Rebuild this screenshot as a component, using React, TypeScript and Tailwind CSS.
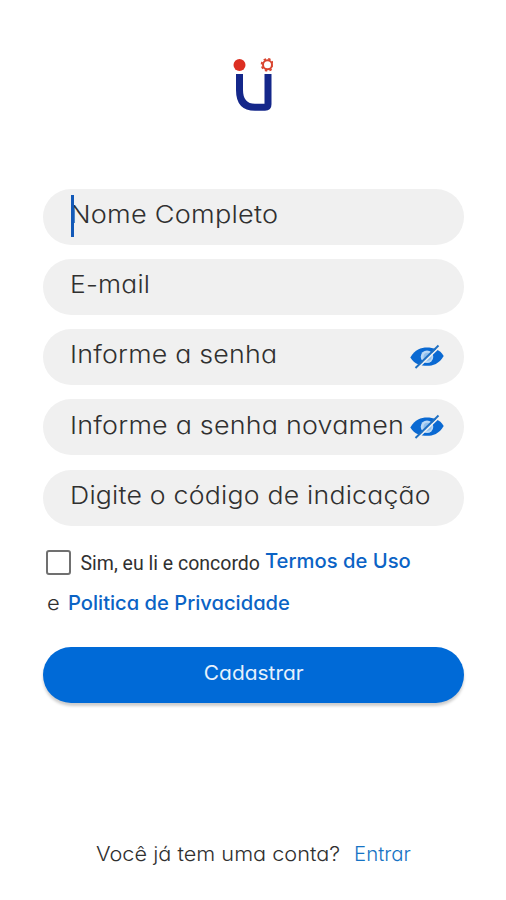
import { useState } from 'react';

const fields = [
    { name: 'nome', label: 'Nome Completo', focused: true, className: 'scale-x-[1.13]' },
    { name: 'email', label: 'E-mail', className: 'scale-x-[1.1]' },
    { name: 'senha', label: 'Informe a senha', secret: true, className: 'scale-x-[1.115]' },
    { name: 'senha2', label: 'Informe a senha novamen', secret: true, className: 'scale-x-[1.119]' },
    { name: 'codigo', label: 'Digite o código de indicação', className: 'scale-x-[1.11]' },
];

function Logo() {
    return (
        <svg width="40" height="56" viewBox="0 0 40 56" fill="none">
            <circle cx="6.5" cy="9" r="6" fill="#dc2f22" />
            <circle cx="34.5" cy="8.8" r="4.5" stroke="#d9442f" strokeWidth="2" />
            <circle cx="34.5" cy="8.8" r="5.9" stroke="#d9442f" strokeWidth="1.8" strokeDasharray="2.4 2.234" />
            <path d="M6.5 18V34Q6.5 51.3 22 51.3H32Q35 51.3 35 48.3V18" stroke="#14278a" strokeWidth="7" />
        </svg>
    );
}

function EyeOff() {
    return (
        <svg width="34" height="26" viewBox="0 0 34 26" className="shrink-0">
            <path d="M0.3 13.5C5 5.5 11 3.6 17 3.6S30 5.5 33.7 12C29 20 23 21.8 17 21.8S4.5 20.5 0.3 13.5Z" fill="#0a69d2" />
            <circle cx="17" cy="12.7" r="6.3" fill="#b9d8f5" />
            <circle cx="17.5" cy="12.7" r="4" fill="#8fbfee" />
            <path d="M7.2 24.6L29.4 3.2" stroke="#f0f0f0" strokeWidth="1.8" />
            <path d="M5.5 24L28.5 1.5" stroke="#1f70c2" strokeWidth="1.9" />
        </svg>
    );
}

export default function App() {
    const [accepted, setAccepted] = useState(false);

    return (
        <div className="h-[900px] w-[506px] overflow-hidden bg-white px-[42.5px] pt-[55.5px] font-['Inter','Open_Sans',sans-serif] font-light text-[#303030] [font-feature-settings:'cv11'] whitespace-nowrap">
            <div className="flex h-[133px] justify-center pr-[1px]">
                <Logo />
            </div>

            <div className="flex w-[421.5px] flex-col gap-[14.3px]">
                {fields.map((field) => (
                    <div key={field.name} className="flex h-[56px] items-center rounded-full bg-[#f0f0f0] pl-[28px] pr-[20px]">
                        <div className="relative flex-1 pb-[3.4px] text-[24px] leading-[32px]">
                            <span className={`-ml-px inline-block origin-left tracking-[0.2px] ${field.className}`}>{field.label}</span>
                            {field.focused && <div className="absolute -top-[4px] left-0 h-[42px] w-[3px] bg-[#1259b8]"></div>}
                        </div>
                        {field.secret && <EyeOff />}
                    </div>
                ))}
            </div>

            <div className="mt-[17.2px] flex h-[40px] items-center pl-[3px]">
                <button
                    onClick={() => setAccepted(!accepted)}
                    className="h-[25px] w-[25px] shrink-0 rounded-[3px] border-2 border-[#707070]"
                >
                    {accepted ? '✓' : ''}
                </button>
                <span className="ml-[10px] w-[184px] pt-[1px] font-[Roboto,sans-serif] text-[19.5px] font-normal">Sim, eu li e concordo</span>
                <a className="origin-left scale-x-[1.01] pb-[4px] text-[20px] font-medium text-[#0b63c5]">Termos de Uso</a>
            </div>
            <div className="flex h-[42px] items-center pb-[1px] pl-[4px] text-[20px]">
                <span className="w-[21px] origin-left scale-x-110">e</span>
                <a className="origin-left scale-x-[1.008] font-medium text-[#0b63c5]">Politica de Privacidade</a>
            </div>

            <button className="mt-[22px] flex h-[56px] w-[421.5px] items-center justify-center rounded-full bg-[#006ad7] pb-[3px] text-[20px] font-normal text-[#e6f1fc] shadow-[0_3px_3px_rgba(0,0,0,0.2)]">
                <span className="scale-x-[1.045]">Cadastrar</span>
            </button>

            <div className="mt-[136.4px] flex h-[30px] items-center pl-[53.5px] text-[20px]">
                <span className="w-[258px] origin-left scale-x-[1.085]">Você já tem uma conta?</span>
                <a className="origin-left scale-x-[1.02] text-[#1673c4]">Entrar</a>
            </div>
        </div>
    );
}
